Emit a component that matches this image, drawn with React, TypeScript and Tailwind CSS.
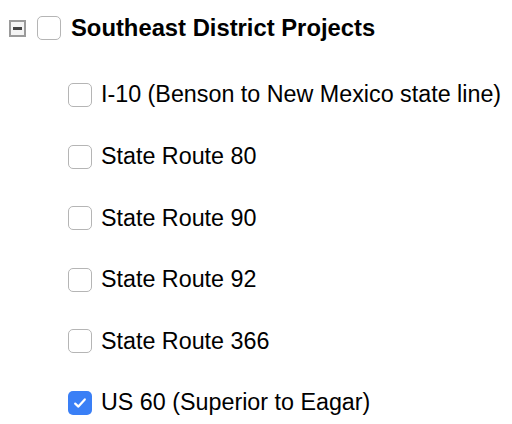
const routes = [
  { label: 'I-10 (Benson to New Mexico state line)', checked: false },
  { label: 'State Route 80', checked: false },
  { label: 'State Route 90', checked: false },
  { label: 'State Route 92', checked: false },
  { label: 'State Route 366', checked: false },
  { label: 'US 60 (Superior to Eagar)', checked: true },
];

function Box({ checked }: { checked: boolean }) {
  if (checked) {
    return (
      <span className="flex h-[24px] w-[24px] shrink-0 items-center justify-center rounded-[5px] bg-[#3a7ff6]">
        <svg width="16" height="16" viewBox="0 0 16 16" fill="none">
          <path d="M3.2 8.6 L6.4 11.6 L12.8 4.4" stroke="white" strokeWidth="2.2" strokeLinecap="round" strokeLinejoin="round" />
        </svg>
      </span>
    );
  }
  return <span className="block h-[24px] w-[24px] shrink-0 rounded-[5px] border border-[#b5b5b5] bg-white" />;
}

export default function App() {
  return (
    <div className="h-[424px] w-[512px] bg-white font-['Liberation_Sans',Arial,sans-serif] text-black">
      {/* header row */}
      <div className="flex h-[24px] items-center pl-[9px] mt-[16px]">
        <span className="flex h-[17px] w-[17px] items-center justify-center border-2 border-[#9a9a9a] bg-[#f4f4f4]">
          <span className="h-[3px] w-[9px] bg-[#444]" />
        </span>
        <span className="ml-[11px] flex">
          <Box checked={false} />
        </span>
        <span className="ml-[10px] text-[23.8px] font-bold leading-none">Southeast District Projects</span>
      </div>

      {/* children */}
      <div className="flex flex-col gap-[37.6px] pl-[68px] pt-[43px]">
        {routes.map((r, i) => (
          <div key={i} className="flex h-[24px] items-center">
            <Box checked={r.checked} />
            <span className="ml-[9px] text-[23.3px] leading-none">{r.label}</span>
          </div>
        ))}
      </div>
    </div>
  );
}
